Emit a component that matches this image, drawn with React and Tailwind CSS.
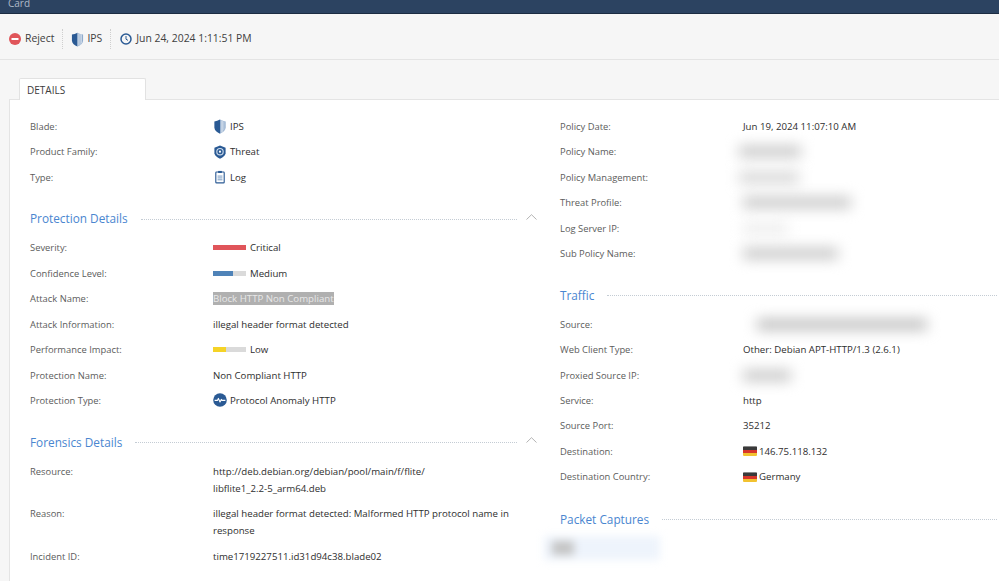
function IpsIcon({ className }) {
  return (
    <svg viewBox="0 0 14 16" className={className}>
      <path d="M1 2.6 C3 2.4 5 1.8 7 .6 V15.6 C3.6 14.4 1.4 12.4 1 9.4 Z" fill="#2a5a94" />
      <path d="M7 .6 C9 1.8 11 2.4 13 2.6 V9.4 C12.6 12.4 10.4 14.4 7 15.6 Z" fill="#8fabcc" />
      <path d="M8.4 1.5v13M9.8 2v11.8M11.2 2.4v9.8" stroke="#fff" strokeWidth="0.6" />
    </svg>
  );
}

function ThreatIcon() {
  return (
    <svg viewBox="0 0 14 15" className="h-[14px] w-[14px] shrink-0">
      <path d="M7 .6 L13 3 V9 C12.2 11.6 10 13.4 7 14.6 C4 13.4 1.8 11.6 1 9 V3 Z" fill="#2a5a94" />
      <circle cx="7" cy="7.2" r="4" fill="#cfdded" />
      <circle cx="7" cy="7.2" r="2.8" fill="#2a5a94" />
      <circle cx="7" cy="7.2" r="1.2" fill="#fff" />
    </svg>
  );
}

function LogIcon() {
  return (
    <svg viewBox="0 0 14 15" className="h-[14px] w-[14px] shrink-0" fill="none">
      <rect x="2.5" y="2.2" width="9" height="11.6" rx="0.8" stroke="#2a5a94" strokeWidth="1.2" />
      <rect x="5" y="1" width="4" height="2.2" fill="#2a5a94" />
      <path d="M4.4 6.5h5.2M4.4 8.5h5.2M4.4 10.5h5.2" stroke="#6f93bc" strokeWidth="1" />
    </svg>
  );
}

function AnomalyIcon() {
  return (
    <svg viewBox="0 0 14 14" className="h-[14px] w-[14px] shrink-0" fill="none">
      <circle cx="7" cy="7" r="6.8" fill="#2a5a94" />
      <path d="M1.6 7.4h2.8l1-2 1.6 3.6 1.3-2.6.7 1h3.4" stroke="#fff" strokeWidth="1.1" strokeLinejoin="round" />
    </svg>
  );
}

function Flag() {
  return (
    <span className="flex h-[10px] w-[14px] shrink-0 flex-col overflow-hidden rounded-[1px] border-t border-[#8a8a8a]">
      <span className="flex-1 bg-[#3a3a3a]" />
      <span className="flex-1 bg-[#d8352a]" />
      <span className="flex-1 bg-[#f2c230]" />
    </span>
  );
}

function Bar({ filled, color }) {
  return (
    <span className="flex h-[5px] w-[33px] shrink-0 bg-[#dadada]">
      <span className={`h-full ${color}`} style={{ width: `${filled}%` }} />
    </span>
  );
}

function Row({ label, children }) {
  return (
    <div className="grid grid-cols-[183px_1fr] pb-[8.45px] text-[9.4px] leading-[17px]">
      <div className="text-[#5c5c5c]">{label}</div>
      <div className="text-[9.66px] font-medium text-[#2e2e2e]">{children}</div>
    </div>
  );
}

function WithIcon({ icon, gap = 'gap-[3px]', children }) {
  return (
    <span className={`flex items-center ${gap}`}>
      {icon}
      {children}
    </span>
  );
}

function Blurred({ w, tone = 'bg-[#c6c6c6]' }) {
  return <div className={`mt-[3px] h-[11px] ${w} ${tone} blur-[7px]`} />;
}

function SectionTitle({ title, chevron }) {
  return (
    <div className="flex h-[20px] items-center text-[11.8px] text-[#4a86d0]">
      <span>{title}</span>
      <span className="ml-[13px] flex-1 border-t border-dotted border-[#c4ccd4]" />
      {chevron && (
        <svg viewBox="0 0 11 6" className="ml-[9px] h-[6px] w-[11px] -translate-y-[2px]" fill="none">
          <path d="M.5 5.5 5.5 .7 10.5 5.5" stroke="#a0a0a0" strokeWidth="0.8" />
        </svg>
      )}
    </div>
  );
}

export default function App() {
  return (
    <div className="h-[581px] w-[999px] overflow-hidden bg-[#f6f6f6] font-['Open_Sans',sans-serif]">
      <div className="h-[14px] overflow-hidden border-b border-[#1c2c42] bg-[#2c4361]">
        <div className="-mt-[4px] pl-[8px] text-[10px] leading-[14px] text-[#aeb9c7]">Card</div>
      </div>

      <div className="flex h-[46px] items-center border-b border-[#e4e4e4] pl-[9px] pt-[5px] text-[10.4px] font-medium text-[#404040]">
        <span className="flex items-center gap-[4px] pr-[8px]">
          <svg viewBox="0 0 12 12" className="h-[12px] w-[12px]">
            <circle cx="6" cy="6" r="6" fill="#e0555a" />
            <rect x="2.5" y="5" width="7" height="2" fill="#fff" />
          </svg>
          Reject
        </span>
        <span className="flex h-[20px] items-center gap-[3px] border-l border-dotted border-[#cfcfcf] pl-[8px] pr-[8px]">
          <IpsIcon className="h-[15px] w-[13px]" />
          IPS
        </span>
        <span className="flex h-[20px] items-center gap-[4px] border-l border-dotted border-[#cfcfcf] pl-[9px]">
          <svg viewBox="0 0 12 12" className="h-[12px] w-[12px]" fill="none">
            <circle cx="6" cy="6" r="5" stroke="#2a5a94" strokeWidth="1.5" />
            <path d="M6 3v3.2l2 1.2" stroke="#2a5a94" strokeWidth="1" />
          </svg>
          Jun 24, 2024 1:11:51 PM
        </span>
      </div>

      <div className="flex h-[39px] items-end pl-[19px]">
        <div className="relative z-10 -mb-px flex h-[22px] w-[127px] items-center rounded-t-[2px] border border-b-0 border-[#e2e2e2] bg-white pl-[7px] pt-[1px] text-[10px] font-medium text-[#3c3c3c]">
          DETAILS
        </div>
      </div>

      <div className="ml-[9px] flex h-[482px] border-l border-t border-[#e4e4e4] bg-white pl-[20px] pt-[18px]">
        <div className="w-[507px] shrink-0">
          <Row label="Blade:"><WithIcon icon={<IpsIcon className="h-[15px] w-[14px] shrink-0" />}>IPS</WithIcon></Row>
          <Row label="Product Family:"><WithIcon icon={<ThreatIcon />}>Threat</WithIcon></Row>
          <Row label="Type:"><WithIcon icon={<LogIcon />}>Log</WithIcon></Row>

          <div className="mb-[10px] mt-[15px]"><SectionTitle title="Protection Details" chevron /></div>
          <Row label="Severity:"><WithIcon icon={<Bar filled={100} color="bg-[#e0555a]" />} gap="gap-[4px]">Critical</WithIcon></Row>
          <Row label="Confidence Level:"><WithIcon icon={<Bar filled={60} color="bg-[#4f83b8]" />} gap="gap-[4px]">Medium</WithIcon></Row>
          <Row label="Attack Name:"><span className="bg-[#b0b0b0] text-[#e8e8e8]">Block HTTP Non Compliant</span></Row>
          <Row label="Attack Information:">illegal header format detected</Row>
          <Row label="Performance Impact:"><WithIcon icon={<Bar filled={40} color="bg-[#f5d327]" />} gap="gap-[4px]">Low</WithIcon></Row>
          <Row label="Protection Name:">Non Compliant HTTP</Row>
          <Row label="Protection Type:"><WithIcon icon={<AnomalyIcon />}>Protocol Anomaly HTTP</WithIcon></Row>

          <div className="mb-[10.5px] mt-[15px]"><SectionTitle title="Forensics Details" chevron /></div>
          <Row label="Resource:">http://deb.debian.org/debian/pool/main/f/flite/<br />libflite1_2.2-5_arm64.deb</Row>
          <Row label="Reason:">illegal header format detected: Malformed HTTP protocol name in<br />response</Row>
          <Row label="Incident ID:">time1719227511.id31d94c38.blade02</Row>
        </div>

        <div className="ml-[23px] flex-1 pr-[2px]">
          <Row label="Policy Date:">Jun 19, 2024 11:07:10 AM</Row>
          <Row label="Policy Name:"><div className="-ml-[4px]"><Blurred w="w-[62px]" /></div></Row>
          <Row label="Policy Management:"><div className="-ml-[4px]"><Blurred w="w-[60px]" tone="bg-[#d4d4d4]" /></div></Row>
          <Row label="Threat Profile:"><Blurred w="w-[108px]" /></Row>
          <Row label="Log Server IP:"><Blurred w="w-[45px]" tone="bg-[#ececec]" /></Row>
          <Row label="Sub Policy Name:"><Blurred w="w-[95px]" /></Row>

          <div className="mb-[10px] mt-[15px]"><SectionTitle title="Traffic" /></div>
          <Row label="Source:"><div className="ml-[14px]"><Blurred w="w-[170px]" tone="bg-[#bdbdbd]" /></div></Row>
          <Row label="Web Client Type:">Other: Debian APT-HTTP/1.3 (2.6.1)</Row>
          <Row label="Proxied Source IP:"><Blurred w="w-[48px]" /></Row>
          <Row label="Service:">http</Row>
          <Row label="Source Port:">35212</Row>
          <Row label="Destination:"><WithIcon icon={<Flag />} gap="gap-[2px]">146.75.118.132</WithIcon></Row>
          <Row label="Destination Country:"><WithIcon icon={<Flag />} gap="gap-[2px]">Germany</WithIcon></Row>

          <div className="mt-[16px]"><SectionTitle title="Packet Captures" /></div>
          <div className="-ml-[16px] mt-[6px] flex h-[24px] w-[116px] items-center bg-[#eef4fc] pl-[8px] blur-[4px]">
            <span className="h-[14px] w-[22px] bg-[#c4c4c4]" />
          </div>
        </div>
      </div>
    </div>
  );
}
